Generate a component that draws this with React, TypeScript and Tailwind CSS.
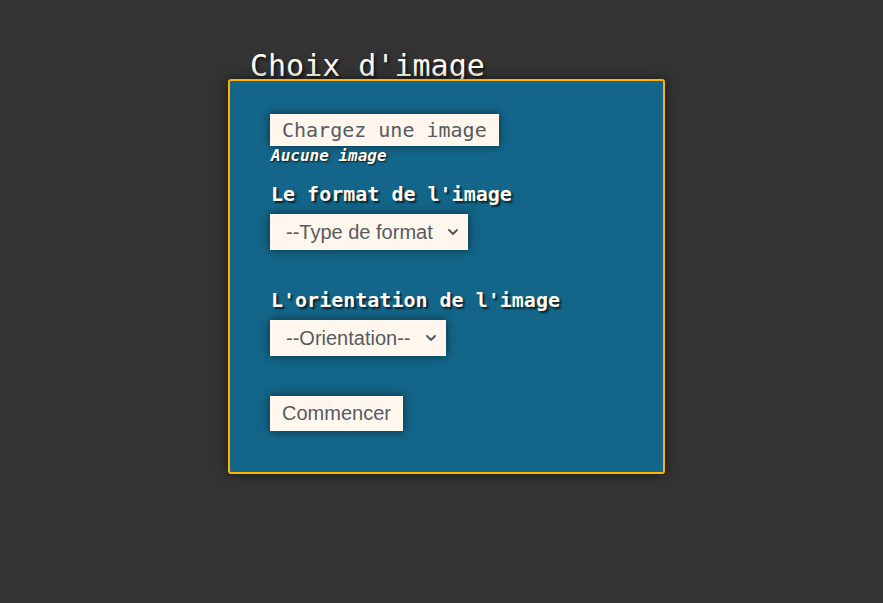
import React, { useState } from 'react';
import { ChevronDown } from 'lucide-react';

const mono = "font-['DejaVu_Sans_Mono','Liberation_Mono',monospace]";
const sans = "font-['Liberation_Sans',Arial,sans-serif]";

const App: React.FC = () => {
  const [format, setFormat] = useState('');
  const [orientation, setOrientation] = useState('');

  return (
    <div className="min-h-screen w-full bg-[#333333] pt-[51px]">
      <div className="ml-[228px] w-[437px]">
        <h1
          className={`${mono} ml-[22px] text-[30px] leading-[30px] text-[#fffbf0] [text-shadow:2px_2px_3px_rgba(0,0,0,0.6)]`}
        >
          Choix d'image
        </h1>
        <form
          className="relative -mt-[2px] rounded-[3px] border-2 border-[#fcb400] bg-[#13668a] px-[40px] pt-[33px] pb-[41px] shadow-[0_0_12px_rgba(0,0,0,0.5)]"
          onSubmit={(e) => e.preventDefault()}
        >
          <button
            type="button"
            className={`${mono} block h-[32px] bg-[#fff7ee] px-3 text-[20px] leading-[32px] text-[#555b60] shadow-[0_0_10px_rgba(0,0,0,0.55)]`}
          >
            Chargez une image
          </button>
          <p
            className={`${mono} h-[20px] pl-[1px] text-[16px] leading-[20px] font-bold italic text-[#fffbf0] [text-shadow:1px_1px_2px_rgba(0,0,0,0.8)]`}
          >
            Aucune image
          </p>

          <label
            className={`${mono} mt-[16px] block pl-[1px] text-[20px] leading-[24px] font-bold text-[#fffbf0] [text-shadow:2px_2px_2px_rgba(0,0,0,0.7)]`}
          >
            Le format de l'image
          </label>
          <div className="relative mt-[8px] w-[198px]">
            <select
              value={format}
              onChange={(e) => setFormat(e.target.value)}
              className={`${sans} block h-[36px] w-full appearance-none bg-[#fff7ee] pl-[16px] text-[20px] text-[#555b60] shadow-[0_0_10px_rgba(0,0,0,0.55)] outline-none`}
            >
              <option value="">--Type de format</option>
              <option value="a4">A4</option>
              <option value="a3">A3</option>
            </select>
            <ChevronDown
              className="pointer-events-none absolute top-1/2 right-[7px] h-[16px] w-[16px] -translate-y-1/2 text-[#555b60]"
              strokeWidth={3}
            />
          </div>

          <label
            className={`${mono} mt-[38px] block pl-[1px] text-[20px] leading-[24px] font-bold text-[#fffbf0] [text-shadow:2px_2px_2px_rgba(0,0,0,0.7)]`}
          >
            L'orientation de l'image
          </label>
          <div className="relative mt-[8px] w-[176px]">
            <select
              value={orientation}
              onChange={(e) => setOrientation(e.target.value)}
              className={`${sans} block h-[36px] w-full appearance-none bg-[#fff7ee] pl-[16px] text-[20px] text-[#555b60] shadow-[0_0_10px_rgba(0,0,0,0.55)] outline-none`}
            >
              <option value="">--Orientation--</option>
              <option value="portrait">Portrait</option>
              <option value="paysage">Paysage</option>
            </select>
            <ChevronDown
              className="pointer-events-none absolute top-1/2 right-[7px] h-[16px] w-[16px] -translate-y-1/2 text-[#555b60]"
              strokeWidth={3}
            />
          </div>

          <button
            type="submit"
            className={`${sans} mt-[40px] block h-[35px] bg-[#fff7ee] px-[12px] text-[20px] leading-[35px] text-[#555b60] shadow-[0_0_10px_rgba(0,0,0,0.55)]`}
          >
            Commencer
          </button>
        </form>
      </div>
    </div>
  );
};

export default App;
